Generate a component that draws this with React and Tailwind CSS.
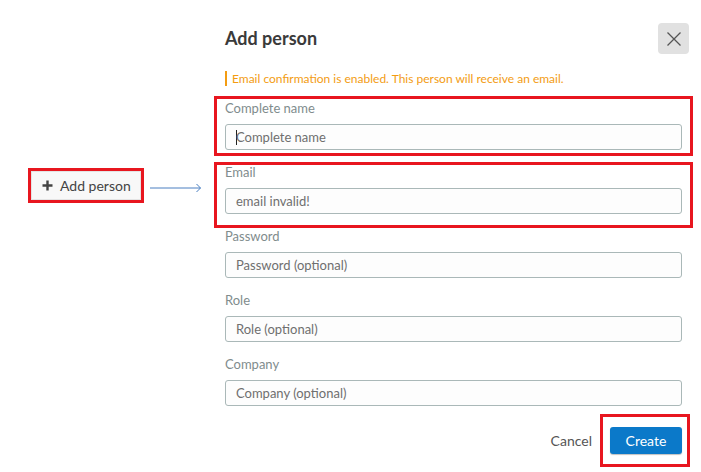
import React from "react";

function Field({ label, text, caret, box }) {
  return (
    <div className="relative flex flex-col">
      <div className="text-[13px] leading-[16px] text-[#7f8c8d] h-[16px]">{label}</div>
      <div className="mt-[8px] h-[26px] border border-[#aab8b8] rounded-[3px] bg-[#fdfdfd] flex items-center pl-[10px] text-[13px] leading-[16px]">
        {caret && <span className="w-[1px] h-[15px] bg-[#222] mr-[-1px]"></span>}
        <span className="text-[#6f6f6f]">{text}</span>
      </div>
      {box && <div className={"absolute border-[3px] border-[#e8161f] pointer-events-none " + box}></div>}
    </div>
  );
}

export default function App() {
  return (
    <div className="w-[701px] h-[472px] bg-white flex font-['Lato',sans-serif] overflow-hidden">
      <div className="pt-[168px] pl-[28px] flex items-start">
        <div className="w-[116px] h-[35px] border-[3px] border-[#e8161f]">
          <div className="w-full h-full bg-[#f8f8f8] border border-[#e4e4e4] flex items-center pl-[10px] gap-[7px] text-[14px] text-[#444]">
            <svg width="11" height="11" viewBox="0 0 11 11">
              <path d="M5.5 0.5v10M0.5 5.5h10" stroke="#444" strokeWidth="2.4" />
            </svg>
            <span>Add person</span>
          </div>
        </div>
        <svg className="ml-[6px] mt-[15px]" width="52" height="10" viewBox="0 0 52 10">
          <path d="M0 5h50.5M46.5 1l4 4-4 4" fill="none" stroke="#4a7fc1" strokeWidth="1" />
        </svg>
      </div>
      <div className="flex-1 flex flex-col pl-[23px] pr-[19px] pt-[23px]">
        <div className="flex items-start justify-between h-[31px]">
          <div className="mt-[3px] text-[18px] leading-[24px] font-bold text-[#3a3a3a]">Add person</div>
          <button className="w-[31px] h-[31px] -mr-[7px] rounded-[4px] bg-[#e1e1e1] flex items-center justify-center">
            <svg width="14" height="14" viewBox="0 0 14 14">
              <path d="M0.5 0.5l13 13M13.5 0.5l-13 13" stroke="#555" strokeWidth="1.3" />
            </svg>
          </button>
        </div>
        <div className="mt-[17px] border-l-2 border-[#f39c12] pl-[5px] text-[12px] leading-[15px] text-[#f39c12]">
          Email confirmation is enabled. This person will receive an email.
        </div>
        <div className="mt-[14px] flex flex-col gap-[14px]">
          <Field label="Complete name" text="Complete name" caret box="-top-[4px] -bottom-[6px] -left-[11px] -right-[11px]" />
          <Field label="Email" text="email invalid!" box="-top-[2px] -bottom-[14px] -left-[11px] -right-[11px]" />
          <Field label="Password" text="Password (optional)" />
          <Field label="Role" text="Role (optional)" />
          <Field label="Company" text="Company (optional)" />
        </div>
        <div className="mt-[21px] flex items-center justify-end gap-[18px]">
          <span className="text-[14px] text-[#555]">Cancel</span>
          <div className="relative">
            <button className="w-[72px] h-[27px] rounded-[3px] bg-[#0b79c9] text-white text-[14px] shadow-[0_1px_1px_rgba(0,0,0,0.25)]">
              Create
            </button>
            <div className="absolute -top-[13px] -bottom-[13px] -left-[10px] -right-[8px] border-[3px] border-[#e8161f] pointer-events-none"></div>
          </div>
        </div>
      </div>
    </div>
  );
}
